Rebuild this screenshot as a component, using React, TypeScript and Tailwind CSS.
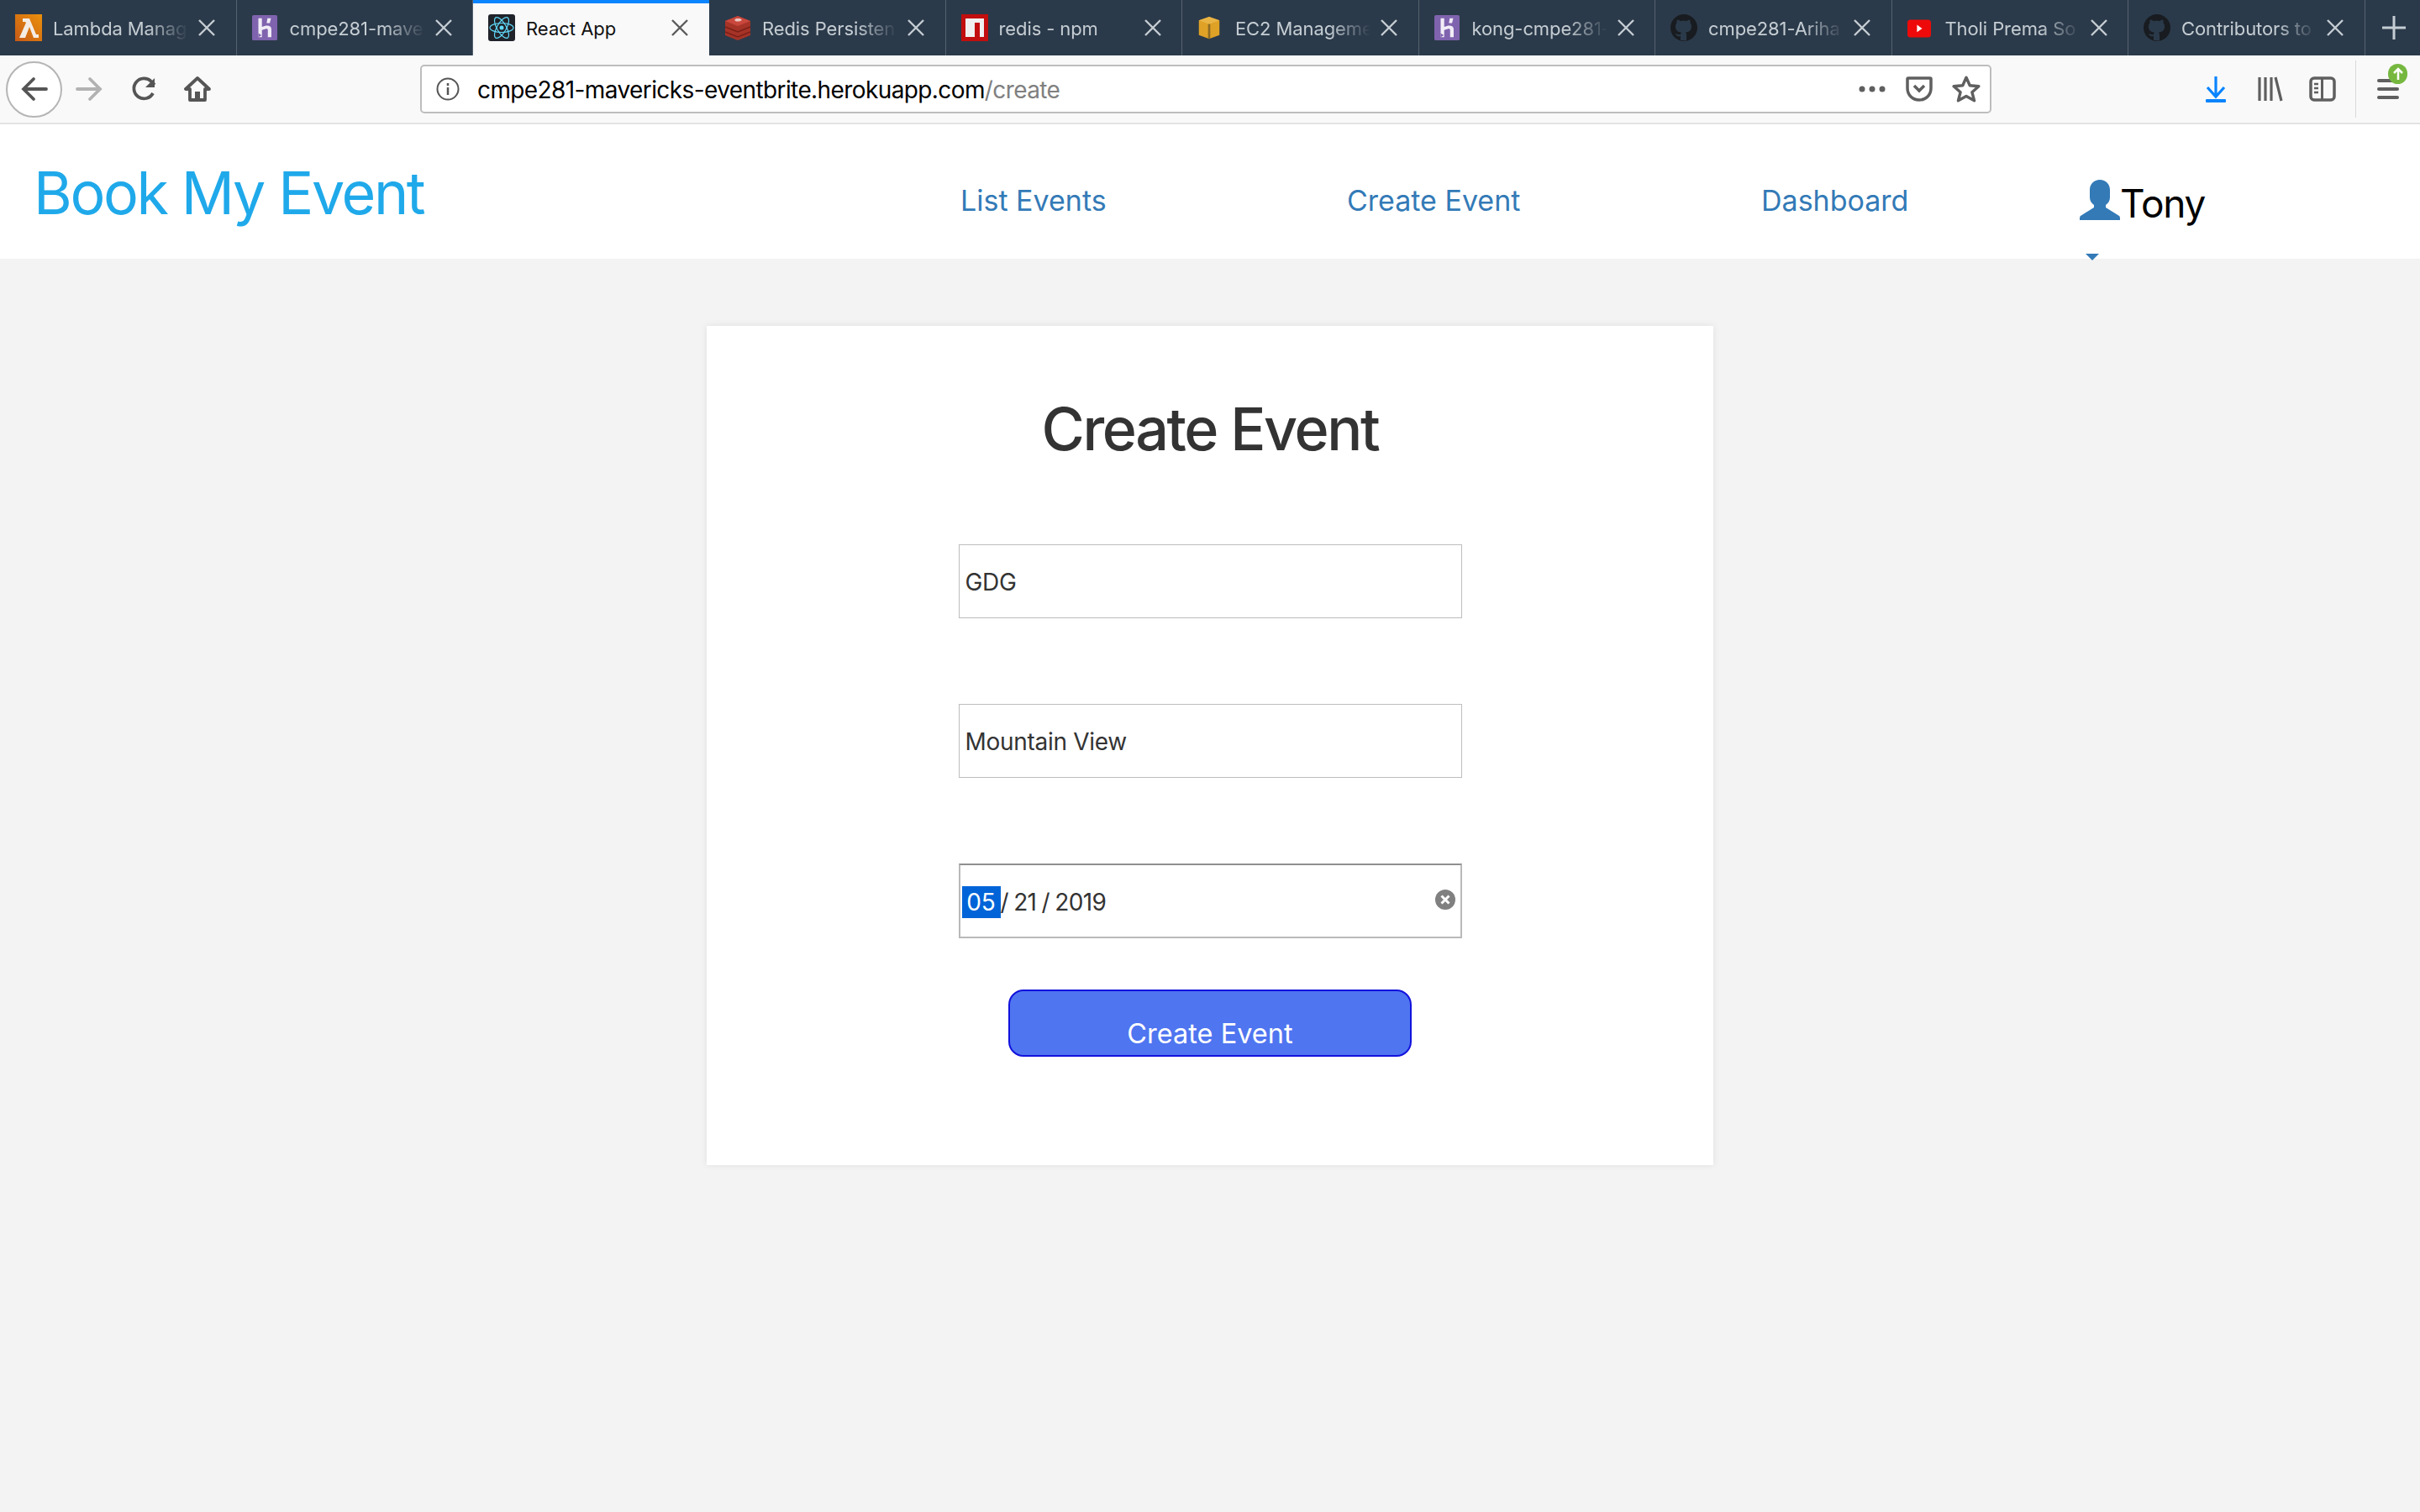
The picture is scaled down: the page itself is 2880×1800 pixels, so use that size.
const font = { fontFamily: "Inter, 'Liberation Sans', sans-serif" };

function Heroku() {
  return (
    <svg viewBox="0 0 32 32" className="w-[30px] h-[32px]">
      <rect width="32" height="32" rx="2" fill="#7f63ae" />
      <path d="M8 4h4.500v11c3-1.500 6-2 8.500-1.500 2.500.5 3.500 2.500 3.500 4.500v10H20v-9c0-1.500-1-2-3-1.500l-4.500 1.500v9H8z" fill="#f1edf7" />
      <path d="M19.500 4H24l-1.500 6h-4z" fill="#f1edf7" />
      <path d="M8 23l4 2.500L8 28z" fill="#7f63ae" />
    </svg>
  );
}

function GitHub() {
  return (
    <svg viewBox="0 0 32 32" className="w-[32px] h-[32px]">
      <circle cx="16" cy="16" r="16" fill="#181c20" />
      <path d="M12 31v-5c-4 1-5-1-6-3 2 0 3 2 6 1 0-1 .5-2 1-2.500-4-.5-7-2-7-7 0-1.500.5-3 1.500-4-.2-1-.2-2.500.5-4 1.500 0 3 1 4 1.700 2-.5 5-.5 7 0 1-.7 2.500-1.700 4-1.700.7 1.500.7 3 .5 4 1 1 1.500 2.500 1.500 4 0 5-3 6.500-7 7 .7.700 1 1.700 1 3v7z" fill="#2b3a4a" />
    </svg>
  );
}

const tabs = [
  { title: "Lambda Manag", icon: "lambda" },
  { title: "cmpe281-mave", icon: "heroku" },
  { title: "React App", icon: "react", active: true },
  { title: "Redis Persisten", icon: "redis" },
  { title: "redis - npm", icon: "npm" },
  { title: "EC2 Manageme", icon: "ec2" },
  { title: "kong-cmpe281-", icon: "heroku" },
  { title: "cmpe281-Ariha", icon: "github" },
  { title: "Tholi Prema So", icon: "youtube" },
  { title: "Contributors to", icon: "github" },
];

function Favicon({ name }: { name: string }) {
  if (name === "heroku") return <Heroku />;
  if (name === "github") return <GitHub />;
  if (name === "lambda")
    return (
      <svg viewBox="0 0 32 32" className="w-[32px] h-[32px]">
        <defs>
          <linearGradient id="lam" x1="0" y1="1" x2="1" y2="0">
            <stop offset="0" stopColor="#c85a16" />
            <stop offset="1" stopColor="#ea900c" />
          </linearGradient>
        </defs>
        <rect width="32" height="32" fill="url(#lam)" />
        <path d="M9 5h8l8 19h3v4h-6l-5-13-5 13H5l8-18-1-1H9z" fill="#f4ece4" />
      </svg>
    );
  if (name === "react")
    return (
      <svg viewBox="0 0 32 32" className="w-[32px] h-[32px]">
        <rect width="32" height="32" rx="3" fill="#20232a" />
        <g fill="none" stroke="#61dafb" strokeWidth="1.200">
          <ellipse cx="16" cy="16" rx="14" ry="5.500" />
          <ellipse cx="16" cy="16" rx="14" ry="5.500" transform="rotate(60 16 16)" />
          <ellipse cx="16" cy="16" rx="14" ry="5.500" transform="rotate(120 16 16)" />
        </g>
        <circle cx="16" cy="16" r="2.500" fill="#61dafb" />
      </svg>
    );
  if (name === "redis")
    return (
      <svg viewBox="0 0 32 32" className="w-[32px] h-[32px]">
        <path d="M1 8l15-6 15 6v17l-15 6-15-6z" fill="#a63327" />
        <path d="M1 15l15 6 15-6M1 21l15 6 15-6" fill="none" stroke="#7a2018" strokeWidth="1.500" />
        <path d="M1 8l15-6 15 6-15 6z" fill="#c9473c" />
        <path d="M14 5h5l2 2-3 1.500h-4l-2-1.500z" fill="#edc6c2" />
      </svg>
    );
  if (name === "npm")
    return (
      <svg viewBox="0 0 32 32" className="w-[32px] h-[32px]">
        <rect width="32" height="32" fill="#c20e0e" />
        <path d="M5 5h22v22h-5V10h-6v17H5z" fill="#f0f0f0" />
      </svg>
    );
  if (name === "ec2")
    return (
      <svg viewBox="0 0 32 32" className="w-[28px] h-[32px]">
        <path d="M16 1l14 5v20l-14 5-14-5V6z" fill="#dfa126" />
        <path d="M2 6l14 5 14-5-14-5z" fill="#eab444" />
        <path d="M14.500 11h3v20h-3z" fill="#8c6a24" />
      </svg>
    );
  return (
    <svg viewBox="0 0 32 32" className="w-[28px] h-[32px]">
      <rect y="5" width="32" height="24" rx="4" fill="#ee0a0a" />
      <path d="M13 12l7 5-7 5z" fill="#fff" />
    </svg>
  );
}

function CloseIcon({ active }: { active?: boolean }) {
  return (
    <svg viewBox="0 0 20 20" className="w-[20px] h-[20px] shrink-0 ml-[12px]">
      <path d="M1 1l18 18M19 1L1 19" stroke={active ? "#5b5b5b" : "#c5cdd3"} strokeWidth="2.400" fill="none" />
    </svg>
  );
}

function Tab({ title, icon, active }: { title: string; icon: string; active?: boolean }) {
  return (
    <div
      className={
        active
          ? "w-[281px] h-full flex items-center bg-[#f9f9f9] border-t-4 border-[#0a84ff] pb-1"
          : "w-[281.500px] h-full flex items-center border-r border-[#55626f]"
      }
    >
      <div className="w-[63px] pl-[18px] shrink-0 flex">
        <Favicon name={icon} />
      </div>
      <span
        className={
          active
            ? "w-[161px] shrink-0 pt-[2px] overflow-hidden whitespace-nowrap text-[22px] text-[#111]"
            : "w-[161px] shrink-0 pt-[2px] overflow-hidden whitespace-nowrap text-[22px] tracking-[-0.1px] text-[#c5cdd3] [mask-image:linear-gradient(to_right,black_70%,transparent_100%)]"
        }
      >
        {title}
      </span>
      <CloseIcon active={active} />
    </div>
  );
}

function TabBar() {
  return (
    <div className="h-[66px] bg-[#2b3a4a] flex items-center">
      {tabs.map((t) => (
        <Tab key={t.title} title={t.title} icon={t.icon} active={t.active} />
      ))}
      <svg viewBox="0 0 28 28" className="w-[28px] h-[28px] ml-[20px]">
        <path d="M14 0v28M0 14h28" stroke="#c5cdd3" strokeWidth="3" />
      </svg>
    </div>
  );
}

function Toolbar() {
  return (
    <div className="h-[82px] bg-[#f9f9f9] border-b-2 border-[#e3e3e3] flex items-center pl-[7px]">
      <div className="w-[67px] h-[67px] rounded-full bg-white border-2 border-[#b5b5b5] flex items-center justify-center">
        <svg viewBox="0 0 32 32" className="w-[32px] h-[32px]">
          <path d="M30 16H4M15 4L3 16l12 12" fill="none" stroke="#555" strokeWidth="3.800" strokeLinecap="round" />
        </svg>
      </div>
      <svg viewBox="0 0 32 32" className="w-[32px] h-[32px] ml-[16px]">
        <path d="M2 16h26M17 4l12 12-12 12" fill="none" stroke="#b2b2b2" strokeWidth="3.800" strokeLinecap="round" />
      </svg>
      <svg viewBox="0 0 32 32" className="w-[32px] h-[32px] ml-[33px]">
        <path d="M27 21a12 12 0 1 1-2-14l4 4" fill="none" stroke="#555" strokeWidth="3.800" />
        <path d="M29 3v11H18z" fill="#555" />
      </svg>
      <svg viewBox="0 0 32 32" className="w-[32px] h-[32px] ml-[32px]">
        <path d="M16 3L2 16h5v13h18V16h5z" fill="none" stroke="#555" strokeWidth="3.800" strokeLinejoin="round" />
        <rect x="13" y="19" width="6" height="10" fill="#555" />
      </svg>
      <div className="ml-[249px] w-[1870px] h-[58px] bg-white border-2 border-[#bdbdbd] rounded-[5px] flex items-center pl-[17px] pr-[11px]">
        <svg viewBox="0 0 28 28" className="w-[28px] h-[28px]">
          <circle cx="14" cy="14" r="12.500" fill="none" stroke="#555" strokeWidth="2" />
          <path d="M14 12v9M14 7v3" stroke="#555" strokeWidth="2.500" />
        </svg>
        <span className="ml-[21px] pt-[2px] text-[28px] text-black whitespace-nowrap tracking-[-0.6px]">
          cmpe281-mavericks-eventbrite.herokuapp.com<span className="text-[#808080]">/create</span>
        </span>
        <svg viewBox="0 0 32 8" className="w-[32px] h-[8px] ml-auto">
          <circle cx="4" cy="4" r="3.500" fill="#5f5f5f" />
          <circle cx="16" cy="4" r="3.500" fill="#5f5f5f" />
          <circle cx="28" cy="4" r="3.500" fill="#5f5f5f" />
        </svg>
        <svg viewBox="0 0 32 30" className="w-[32px] h-[30px] ml-[24px]">
          <path d="M3 2h26a1 1 0 0 1 1 1v11c0 8-6 14-14 14S2 22 2 14V3a1 1 0 0 1 1-1z" fill="none" stroke="#5f5f5f" strokeWidth="3.500" />
          <path d="M10 11l6 6 6-6" fill="none" stroke="#5f5f5f" strokeWidth="3.500" />
        </svg>
        <svg viewBox="0 0 32 32" className="w-[34px] h-[34px] ml-[23px]">
          <path d="M16 3l4 9 10 1-7.500 6.500L25 29l-9-5-9 5 2.500-9.500L2 13l10-1z" fill="none" stroke="#5f5f5f" strokeWidth="3.200" strokeLinejoin="round" />
        </svg>
      </div>
      <svg viewBox="0 0 26 32" className="w-[26px] h-[32px] ml-[254px]">
        <path d="M13 1v24M3 14l10 11 10-11" fill="none" stroke="#0a84ff" strokeWidth="3.200" />
        <rect x="1" y="28" width="24" height="4" rx="1" fill="#0a84ff" />
      </svg>
      <svg viewBox="0 0 30 30" className="w-[30px] h-[30px] ml-[37px]">
        <path d="M2 1v28M9 1v28M16 1v28M21 1l7 28" fill="none" stroke="#5f5f5f" strokeWidth="3.200" />
      </svg>
      <svg viewBox="0 0 32 30" className="w-[32px] h-[30px] ml-[31px]">
        <rect x="2" y="2" width="28" height="26" rx="4" fill="none" stroke="#5f5f5f" strokeWidth="3.500" />
        <rect x="14" y="2" width="3" height="26" fill="#5f5f5f" />
        <path d="M6 9h5M6 14h5M6 19h5" stroke="#5f5f5f" strokeWidth="2.500" />
      </svg>
      <div className="w-px h-[68px] bg-[#d9d9d9] ml-[23px]" />
      <div className="relative ml-[25px] w-[26px] flex flex-col gap-[6px]">
        <div className="h-[4px] rounded-full bg-[#5f5f5f]" />
        <div className="h-[4px] rounded-full bg-[#5f5f5f]" />
        <div className="h-[4px] rounded-full bg-[#5f5f5f]" />
        <div className="absolute left-[13px] top-[-18px] w-[23px] h-[24px] rounded-full bg-[#76b83f] flex items-center justify-center">
          <svg viewBox="0 0 16 16" className="w-[16px] h-[16px]">
            <path d="M8 15V2M3 7l5-5 5 5" fill="none" stroke="#fff" strokeWidth="2.500" />
          </svg>
        </div>
      </div>
    </div>
  );
}

function NavBar() {
  return (
    <nav className="h-[160px] bg-white flex items-center pl-[40px] relative">
      <a className="w-[1103px] shrink-0 text-[70px] leading-none text-[#1fa9ea] pt-[4px] tracking-[-2.4px]">Book My Event</a>
      <a className="w-[460px] shrink-0 text-[34px] text-[#337ab7] pt-[21px]">List Events</a>
      <a className="w-[493px] shrink-0 text-[34px] text-[#337ab7] pt-[21px]">Create Event</a>
      <a className="w-[379px] shrink-0 text-[34px] text-[#337ab7] pt-[21px]">Dashboard</a>
      <div className="flex items-end text-[46px] tracking-[-1.2px] leading-none text-black pt-[22px]">
        <svg viewBox="0 0 48 48" className="w-[48px] h-[48px] mb-[3px]">
          <path d="M24 0c7 0 12 5 12 12v9c0 4-2 7-5 9v3l16 10c1 1 1 2 1 5H0c0-3 0-4 1-5l16-10v-3c-3-2-5-5-5-9v-9C12 5 17 0 24 0z" fill="#337ab7" />
        </svg>
        <span>Tony</span>
      </div>
      <svg viewBox="0 0 16 8" className="absolute left-[2482px] bottom-[-2px] w-[16px] h-[8px]">
        <path d="M0 0h16l-8 8z" fill="#337ab7" />
      </svg>
    </nav>
  );
}

function Field({ value }: { value: string }) {
  return (
    <div className="w-[599px] h-[88px] bg-white border border-[#bdbdbd] flex items-center pl-[7px] pt-[2px] text-[28px] tracking-[-0.3px] text-[#333]">
      {value}
    </div>
  );
}

function DateField() {
  return (
    <div className="w-[599px] h-[89px] bg-white border-2 border-[#b9b9b9] border-t-[#8f8f8f] flex items-center pl-[2px] pr-[6px] text-[28px] text-[#333]">
      <span className="h-[38px] w-[46px] mt-[2px] bg-[#0064d8] text-white flex items-center justify-center">05</span>
      <span className="mt-[2px] tracking-[-0.65px] [word-spacing:-1px]">/ 21 / 2019</span>
      <svg viewBox="0 0 24 24" className="w-[24px] h-[24px] ml-auto mb-[4px]">
        <circle cx="12" cy="12" r="12" fill="#808080" />
        <path d="M7.500 7.500l9 9M16.500 7.500l-9 9" stroke="#fff" strokeWidth="3" />
      </svg>
    </div>
  );
}

function CreateForm() {
  return (
    <div className="w-[1198px] h-[999px] bg-white shadow-[0_0_8px_rgba(0,0,0,0.08)] flex flex-col items-center pt-[83px]">
      <h1 className="text-[70px] leading-[80px] font-medium text-[#333] tracking-[-2.4px]">Create Event</h1>
      <div className="flex flex-col items-center mt-[97px] gap-[15px]">
        <div className="flex flex-col gap-[102px]">
          <Field value="GDG" />
          <Field value="Mountain View" />
          <DateField />
        </div>
        <button className="mt-[46px] w-[480px] h-[80px] rounded-[18px] bg-[#4f75f0] border-2 border-[#1212dd] text-white text-[32.500px] flex items-end justify-center leading-none pb-[9px]">
          Create Event
        </button>
      </div>
    </div>
  );
}

export default function App() {
  return (
    <div className="min-h-screen h-[1800px] overflow-hidden bg-[#f3f3f3]" style={font}>
      <TabBar />
      <Toolbar />
      <NavBar />
      <main className="flex justify-center pt-[80px]">
        <CreateForm />
      </main>
    </div>
  );
}
